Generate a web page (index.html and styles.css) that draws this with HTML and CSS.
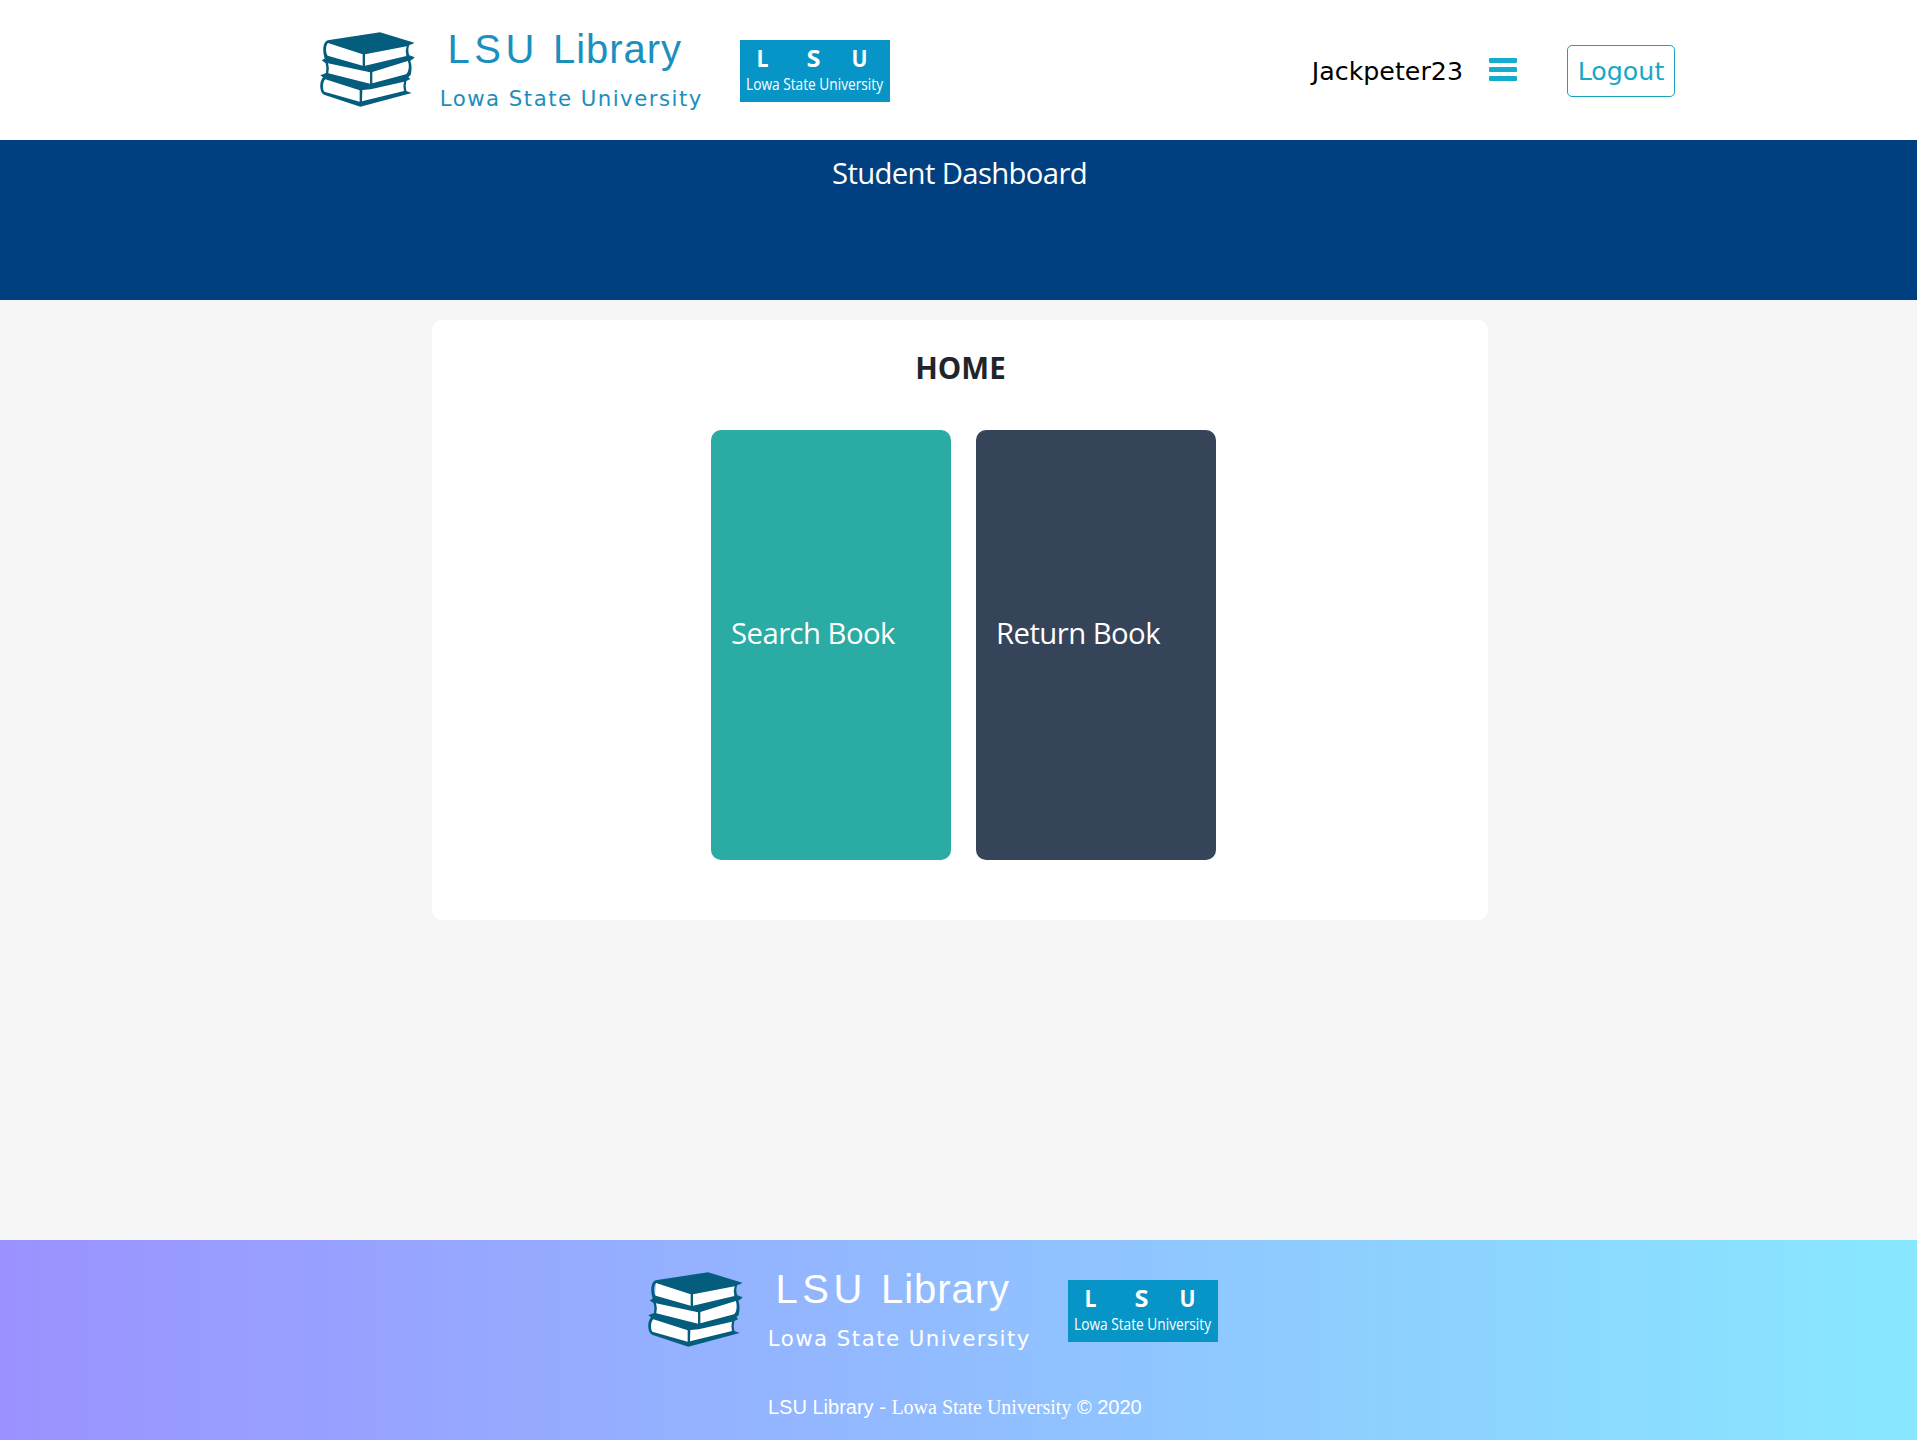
FILE: index.html
```html
<!DOCTYPE html>
<html lang="en">
<head>
<meta charset="utf-8">
<title>LSU Library - Student Dashboard</title>
<link rel="stylesheet" href="styles.css">
</head>
<body>
<svg class="defs" aria-hidden="true">
  <symbol id="logo" viewBox="0 0 600 140">
    <g transform="translate(0 10) scale(.33333)">
      <path fill="#fff" d="M84 94 L192 130 L325 106 L322 138 L325 150 L326 200 L316 206 L314 244 L182 284 L68 248 L68 208 L82 194 L80 156 Z"/>
      <path fill="#045d7c" d="M74 146 C67 122 68 96 83 91 L240 67 L343 98 Q340 102 328 105 Q322 120 328 136 L344 142 Q340 148 331 152 Q338 170 332 195 L325 202 L331 207 L319 213 Q315 228 319 243 L335 249 L181 290 L72 254 C58 248 57 215 69 202 L61 196 L78 189 Q81 175 77 160 L65 151 Z
      M84 99 C77 105 76 128 83 137 L188 167 L188 133 Z
      M195 133 L195 167 L319 138 Q315 122 320 109 Z
      M84 160 Q89 175 85 190 L210 221 L210 187 Z
      M217 186 L217 220 L318 193 C327 186 329 164 323 153 Z
      M76 208 C68 215 67 237 73 245 L179 275 L179 241 Z
      M187 240 L186 274 L312 243 Q308 228 312 215 L212 238 Z" fill-rule="evenodd"/>
    </g>
    <g fill="currentColor">
      <text class="logo-title" x="147.500" y="62.500" textLength="87">LSU</text>
      <text class="logo-title" x="253" y="62.500" textLength="128">Library</text>
      <text class="logo-sub" x="139.800" y="106" textLength="261.500">Lowa State University</text>
    </g>
    <rect x="440" y="40" width="150" height="62" fill="#0794c6"/>
    <g fill="#fff">
      <text class="badge-letter" x="456.500" y="66.500" textLength="12" lengthAdjust="spacingAndGlyphs">L</text>
      <text class="badge-letter" x="506.500" y="66.500" textLength="14" lengthAdjust="spacingAndGlyphs">S</text>
      <text class="badge-letter" x="551.500" y="66.500" textLength="16" lengthAdjust="spacingAndGlyphs">U</text>
      <text class="badge-sub" x="446" y="90" textLength="137" lengthAdjust="spacingAndGlyphs">Lowa State University</text>
    </g>
  </symbol>
</svg>

<header class="header">
  <svg class="logo logo-blue"><use href="#logo"/></svg>
  <nav class="nav">
    <span class="username">Jackpeter23</span>
    <svg class="menu-icon" viewBox="0 0 28 23"><rect width="28" height="5" rx="1"/><rect y="9" width="28" height="5" rx="1"/><rect y="18" width="28" height="5" rx="1"/></svg>
    <a class="logout">Logout</a>
  </nav>
</header>

<section class="banner"><h1 class="banner-title">Student Dashboard</h1></section>

<main class="main">
  <section class="card">
    <h2 class="card-title">HOME</h2>
    <div class="tiles">
      <a class="tile tile-search">Search Book</a>
      <a class="tile tile-return">Return Book</a>
    </div>
  </section>
</main>

<footer class="footer">
  <svg class="logo logo-white"><use href="#logo"/></svg>
  <p class="copyright">LSU Library - <span class="school">Lowa State University</span> © 2020</p>
</footer>
</body>
</html>
```
FILE: styles.css
```css
* { box-sizing: border-box; }
body {
  margin: 0;
  min-height: 1440px;
  display: flex;
  flex-direction: column;
  background: #f6f6f6;
  font-family: "Open Sans", "Noto Sans", sans-serif;
}
.defs { display: none; }
.logo { display: block; width: 600px; height: 140px; flex: none; }
.logo-blue { color: #1b8fbd; }
.logo-white { color: #fff; }
.logo-title { font: 40px "Liberation Sans", Arial, sans-serif; }
.logo-sub { font: 21.3px "DejaVu Sans", Verdana, sans-serif; }
.badge-letter { font: bold 23px "Open Sans", sans-serif; }
.badge-sub { font: 500 17px "Open Sans", sans-serif; }

.header {
  height: 140px;
  padding: 0 242px 0 300px;
  display: flex;
  justify-content: space-between;
  background: #fff;
}
.nav {
  display: flex;
  align-items: center;
  height: 142px;
  font: 25.3px/50px "DejaVu Sans", Verdana, sans-serif;
}
.username { margin-right: 26px; padding-top: 1px; color: #000; }
.menu-icon { width: 28px; height: 23px; margin: 0 50px 3px 0; fill: #14adcd; }
.logout {
  width: 108px;
  height: 52px;
  border: 1px solid #17a2c0;
  border-radius: 5px;
  text-align: center;
  line-height: 51px;
  color: #17a8c8;
}

.banner { height: 160px; background: #004080; }
.banner-title {
  margin: 0;
  padding: 10px 0 0 2px;
  text-align: center;
  font-size: 29.3px;
  line-height: 46px;
  font-weight: 400;
  letter-spacing: -0.65px;
  color: #fff;
}

.main { flex: 1; padding: 20px 0 0 3px; }
.card {
  width: 1056px;
  height: 600px;
  margin: 0 auto;
  border-radius: 10px;
  background: #fff;
}
.card-title {
  margin: 0;
  padding: 25px 0 39px 1px;
  text-align: center;
  font-size: 29.5px;
  line-height: 46px;
  font-weight: 700;
  color: #212529;
}
.tiles { display: flex; gap: 25px; padding-left: 279px; }
.tile {
  display: flex;
  align-items: center;
  width: 240px;
  height: 430px;
  padding: 0 20px 25px;
  border-radius: 10px;
  font-size: 29.3px;
  line-height: 46px;
  letter-spacing: -0.55px;
  color: #fff;
}
.tile-search { background: #2aaba3; }
.tile-return { background: #364459; }

.footer {
  height: 200px;
  padding-left: 628px;
  background: linear-gradient(to right, #9b92ff, #88e8ff);
}
.copyright {
  margin: 12px 0 0 140px;
  font: 20px/30px "Liberation Sans", Arial, sans-serif;
  color: #fff;
}
.school { font-family: "Liberation Serif", "Times New Roman", serif; }
```
